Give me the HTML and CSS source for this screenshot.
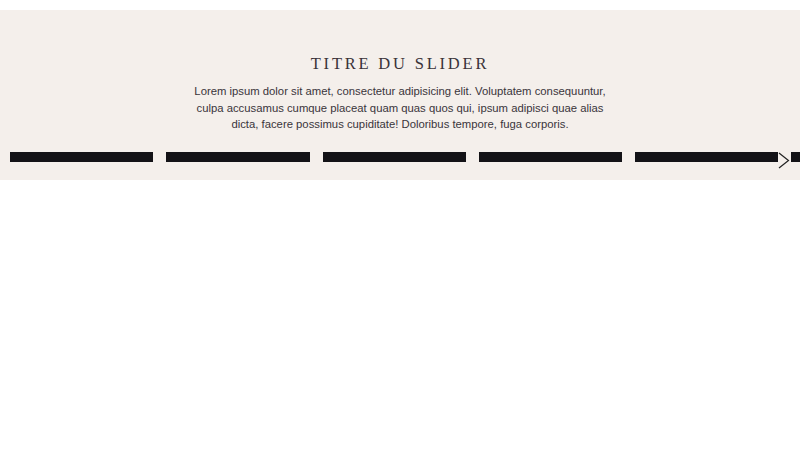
FILE: index.html
```html
<!DOCTYPE html>
<html lang="fr">
<head>
    <meta charset="UTF-8">
    <meta name="viewport" content="width=device-width, initial-scale=1.0">
    <title>Slider</title>
    <link rel="stylesheet" href="styles.css">
</head>
<body>
    <section class="slider-section">
        <h2 class="slider-title">Titre du slider</h2>
        <p class="slider-intro">Lorem ipsum dolor sit amet, consectetur adipisicing elit. Voluptatem consequuntur, culpa accusamus cumque placeat quam quas quos qui, ipsum adipisci quae alias dicta, facere possimus cupiditate! Doloribus tempore, fuga corporis.</p>

        <div class="slider">
            <div class="slider-track">
                <div class="slide"></div>
                <div class="slide"></div>
                <div class="slide"></div>
                <div class="slide"></div>
                <div class="slide"></div>
                <div class="slide"></div>
            </div>
            <button class="slider-next" aria-label="Suivant">
                <svg width="12" height="17" viewBox="0 0 12 17">
                    <path d="M1 1 L10.5 8.5 L1 16" fill="none" stroke="#222" stroke-width="1.2"/>
                </svg>
            </button>
        </div>
    </section>
</body>
</html>
```

FILE: styles.css
```css
body {
    margin: 0;
    font-family: "Liberation Sans", Arial, sans-serif;
    background: #fff;
}
.slider-section {
    margin-top: 10px;
    padding: 43px 0 18px;
    background-color: #f4efeb;
    text-align: center;
}
.slider-title {
    margin: 0 0 8px;
    font-family: "Liberation Serif", "Times New Roman", serif;
    font-weight: normal;
    font-size: 16.5px;
    line-height: 22px;
    letter-spacing: 2.8px;
    text-transform: uppercase;
    color: #3a3339;
}
.slider-intro {
    max-width: 420px;
    margin: 0 auto 19px;
    font-size: 11.3px;
    line-height: 16.5px;
    color: #3a353b;
}
.slider {
    position: relative;
}
.slider-track {
    display: flex;
    gap: 13px;
    padding-left: 10px;
    overflow: hidden;
}
.slide {
    flex: 0 0 143.25px;
    height: 10px;
    background-color: #131216;
}
.slider-next {
    position: absolute;
    top: 0;
    right: 10px;
    padding: 0;
    border: none;
    background: none;
    line-height: 0;
    cursor: pointer;
}
```
